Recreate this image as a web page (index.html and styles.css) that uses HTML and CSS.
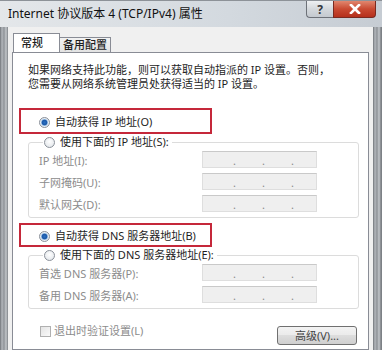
FILE: index.html
```html
<!DOCTYPE html>
<html lang="zh-CN">
<head>
    <meta charset="UTF-8">
    <title>Internet 协议版本 4 (TCP/IPv4) 属性</title>
    <link rel="stylesheet" href="styles.css">
</head>
<body>
    <div class="window">
        <div class="titlebar">
            <span class="title">Internet 协议版本 4 (TCP/IPv4) 属性</span>
            <div class="controls">
                <span class="btn-help">?</span>
                <span class="btn-close">
                    <svg width="14" height="10" viewBox="0 0 14 10">
                        <path d="M3 1 L11 9 M11 1 L3 9" stroke="#fff" stroke-width="2.6" stroke-linecap="square"/>
                    </svg>
                </span>
            </div>
        </div>

        <div class="frame-row">
            <div class="frame-side"></div>
            <div class="client">
                <div class="tabs">
                    <div class="tab active">常规</div>
                    <div class="tab">备用配置</div>
                </div>

                <div class="panel">
                    <p class="intro">如果网络支持此功能，则可以获取自动指派的 IP 设置。否则，<br>您需要从网络系统管理员处获得适当的 IP 设置。</p>

                    <!-- red marks -->
                    <div class="mark mark-ip">
                        <div class="option"><span class="radio on"></span>自动获得 IP 地址(O)</div>
                    </div>

                    <fieldset class="group">
                        <legend class="option"><span class="radio"></span>使用下面的 IP 地址(S):</legend>
                        <div class="field">
                            <span class="label">IP 地址(I):</span>
                            <span class="ipbox"><span>.</span><span>.</span><span>.</span></span>
                        </div>
                        <div class="field">
                            <span class="label">子网掩码(U):</span>
                            <span class="ipbox"><span>.</span><span>.</span><span>.</span></span>
                        </div>
                        <div class="field">
                            <span class="label">默认网关(D):</span>
                            <span class="ipbox"><span>.</span><span>.</span><span>.</span></span>
                        </div>
                    </fieldset>

                    <div class="mark mark-dns">
                        <div class="option"><span class="radio on"></span>自动获得 DNS 服务器地址(B)</div>
                    </div>

                    <fieldset class="group group-dns">
                        <legend class="option"><span class="radio"></span>使用下面的 DNS 服务器地址(E):</legend>
                        <div class="field">
                            <span class="label">首选 DNS 服务器(P):</span>
                            <span class="ipbox"><span>.</span><span>.</span><span>.</span></span>
                        </div>
                        <div class="field">
                            <span class="label">备用 DNS 服务器(A):</span>
                            <span class="ipbox"><span>.</span><span>.</span><span>.</span></span>
                        </div>
                    </fieldset>

                    <div class="bottom-row">
                        <div class="check-line"><span class="checkbox"></span>退出时验证设置(L)</div>
                        <div class="button">高级(V)...</div>
                    </div>
                </div>
            </div>
            <div class="frame-side right"></div>
        </div>
    </div>
</body>
</html>
```

FILE: styles.css
```css
* {
    margin: 0;
    padding: 0;
    box-sizing: border-box;
}

html, body {
    width: 382px;
    height: 350px;
    overflow: hidden;
}

body {
    font-family: 'Noto Sans', 'Noto Sans CJK SC', sans-serif;
    font-size: 11px;
    color: #1e1e1e;
    background-color: #c9ced4;
}

.window {
    height: 350px;
    display: flex;
    flex-direction: column;
}

/* Title bar */
.titlebar {
    height: 27px;
    flex-shrink: 0;
    display: flex;
    justify-content: space-between;
    align-items: flex-start;
    background: linear-gradient(to right, #e4e7ea, #d3d9df 60%, #c6ccd3);
    border-top: 1px solid #8d9298;
}

.title {
    font-size: 12px;
    line-height: 26px;
    padding-left: 8px;
    color: #111;
}

.controls {
    display: flex;
    margin-right: 6px;
}

.btn-help, .btn-close {
    height: 17px;
    display: flex;
    align-items: center;
    justify-content: center;
    border: 1px solid #6d7178;
    border-top: none;
}

.btn-help {
    width: 27px;
    border-right: none;
    border-radius: 0 0 0 4px;
    background: linear-gradient(#eef0f2, #d4d8dc 50%, #c4c9cf);
    color: #33373c;
    font-size: 12px;
    font-weight: bold;
}

.btn-close {
    width: 43px;
    border-color: #7a2a20;
    border-radius: 0 0 4px 0;
    background: linear-gradient(#e1876f, #c94a32 50%, #b5301c);
}

/* Frame and client area */
.frame-row {
    flex: 1;
    display: flex;
}

.frame-side {
    width: 8px;
    background: linear-gradient(to right, #6f7378, #b3b7bc 2px, #8e9297 4px, #c3c7cb 6px, #7d8186 8px);
}

.frame-side.right {
    width: 9px;
}

.client {
    flex: 1;
    background-color: #f0f0f0;
    padding: 6px 4px 0 4px;
    display: flex;
    flex-direction: column;
}

/* Tabs */
.tabs {
    display: flex;
    align-items: flex-end;
    padding-left: 1px;
    height: 19px;
    position: relative;
    z-index: 1;
}

.tab {
    height: 15px;
    line-height: 14px;
    padding: 0 3px;
    border: 1px solid #898c95;
    border-bottom: none;
    background: linear-gradient(#f2f2f2, #e3e3e3);
    font-size: 11px;
    font-weight: 500;
}

.tab.active {
    height: 19px;
    width: 47px;
    padding: 2px 7px 0;
    background: #fff;
    margin-right: -1px;
}

.tab + .tab {
    margin-left: 0;
}

.panel {
    flex: 1;
    background-color: #fff;
    border: 1px solid #898c95;
    padding: 0 9px 0 6px;
}

.intro {
    margin: 10px 0 0 9px;
    line-height: 14px;
    font-size: 11px;
}

/* Options */
.option {
    display: flex;
    align-items: center;
    gap: 5px;
    font-size: 11px;
    line-height: 16px;
}

.radio {
    width: 11px;
    height: 11px;
    border-radius: 50%;
    border: 1px solid #8a9099;
    background: radial-gradient(circle at 50% 40%, #ffffff, #dde2e7);
    flex-shrink: 0;
}

.radio.on {
    background: radial-gradient(circle, #2a6fc0 0, #1c58a8 2.5px, #9fc2e6 3.2px, #e8eef4 4px);
}

.mark {
    width: 193px;
    border: 2px solid #c5283a;
    margin-top: 17px;
}

.mark-ip {
    height: 26px;
    padding: 4px 0 0 18px;
}

.mark-dns {
    height: 24px;
    margin-top: 5px;
    padding: 3px 0 0 18px;
}

.group {
    margin-left: 9px;
    border: 1px solid #dcdcdc;
    border-radius: 3px;
    padding: 0 41px 5px 9px;
}

.group legend {
    margin-left: 5px;
    padding: 0 3px 0 1px;
}

.field {
    display: grid;
    grid-template-columns: 1fr 115px;
    align-items: center;
    margin-top: 5px;
    color: #8c8c8c;
}

.field:first-of-type {
    margin-top: 1px;
}

.label {
    padding-left: 1px;
}

.ipbox {
    height: 17px;
    display: flex;
    align-items: flex-end;
    padding-left: 17px;
    background: #efefef;
    border: 1px solid #dedede;
    border-top-color: #c9c9c9;
    color: #8a8a8a;
}

.ipbox span {
    width: 29px;
    text-align: center;
    line-height: 13px;
}

/* Bottom row */
.bottom-row {
    display: flex;
    justify-content: space-between;
    align-items: flex-start;
    margin-top: 15px;
    padding-left: 21px;
}

.check-line {
    display: flex;
    align-items: center;
    gap: 3px;
    line-height: 14px;
    color: #8c8c8c;
}

.checkbox {
    width: 11px;
    height: 11px;
    border: 1px solid #b0b0b0;
    background: linear-gradient(135deg, #e4e4e4, #fafafa);
}

.button {
    width: 80px;
    height: 19px;
    margin-top: 2px;
    margin-right: 2px;
    border: 1px solid #707070;
    border-radius: 3px;
    background: linear-gradient(#f3f3f3, #ebebeb 45%, #dddddd 50%, #cfcfcf);
    text-align: center;
    line-height: 17px;
    color: #444;
}
```
